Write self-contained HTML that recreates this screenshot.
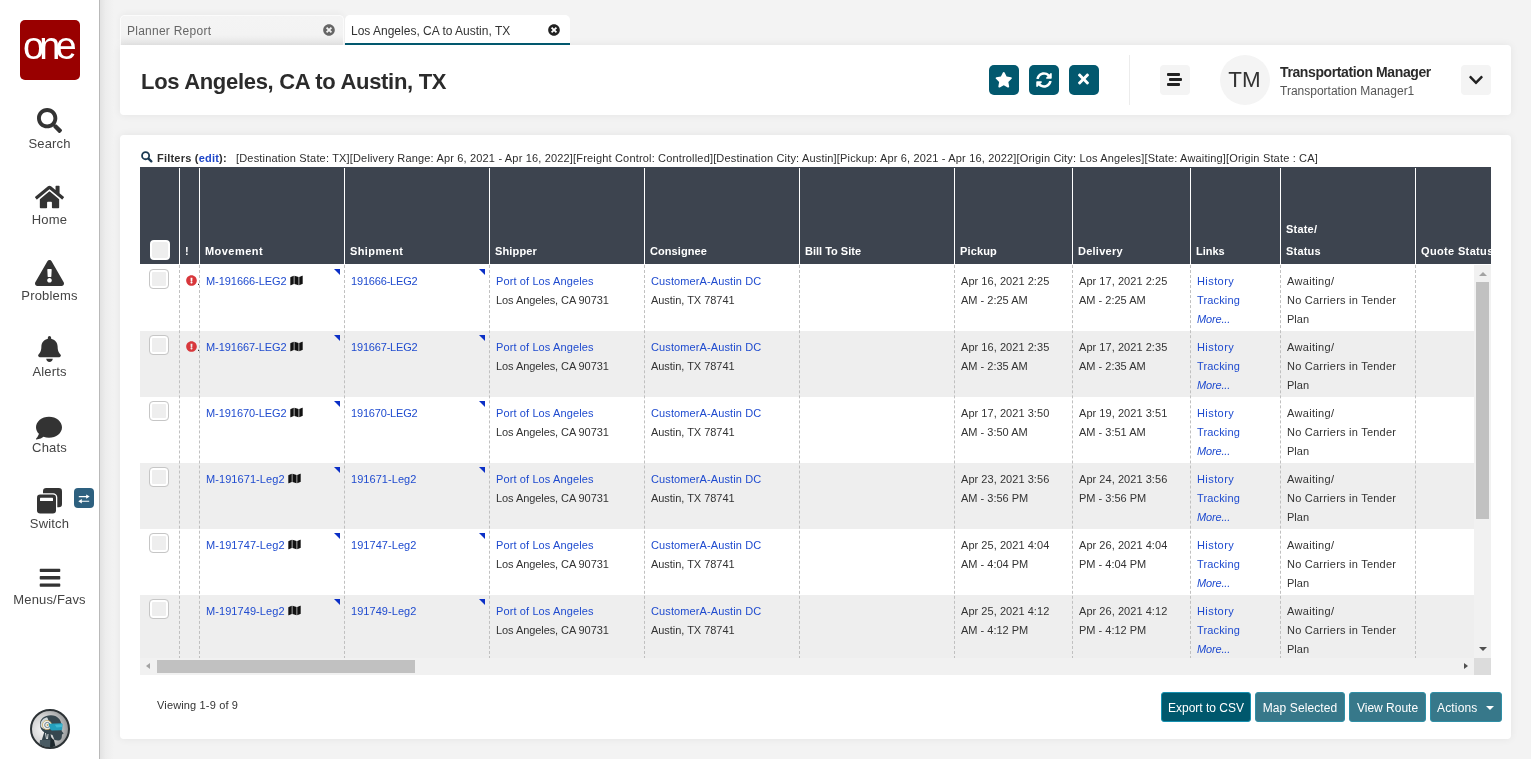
<!DOCTYPE html>
<html lang="en"><head><meta charset="utf-8"><title>Los Angeles, CA to Austin, TX</title>
<style>
*{box-sizing:border-box;margin:0;padding:0}
html,body{width:1531px;height:759px;overflow:hidden}
body{background:#f3f3f3;will-change:transform;font-family:"Liberation Sans",sans-serif;color:#333;position:relative;font-size:11px}
.ic{position:absolute;display:block}
svg{display:inline-block}
a{color:#1f4bcf;text-decoration:none}
#side{position:absolute;left:0;top:0;width:100px;height:759px;background:#fff;border-right:1px solid #b9b9b9}
#shade{position:absolute;left:100px;top:0;width:14px;height:759px;background:linear-gradient(90deg,#e2e2e2,#ededed 40%,#f3f3f3)}
#logo{position:absolute;left:20px;top:20px;width:60px;height:60px;border-radius:5px;background:#990000;color:#fff;text-align:center}
#logo span{display:block;white-space:nowrap;font-size:38px;line-height:60px;letter-spacing:-4.850px;position:absolute;left:3px;top:-4px}
.navl{position:absolute;left:0;width:99px;text-align:center;font-size:13px;line-height:16px;color:#444;letter-spacing:0.170px}
#badge{position:absolute;left:74px;top:488px;width:20px;height:20px;border-radius:4px;background:#2d607f;text-align:center;line-height:20px}

.tab{position:absolute;top:15px;height:30px;width:224px;font-size:12px;line-height:28px;padding-left:6px;border-radius:5px 5px 0 0}
#tab1{left:120px;background:linear-gradient(#f4f4f4 0,#f3f3f3 65%,#e6e6e6 100%);border:1px solid #fbfbfb;border-bottom:none;color:#666;letter-spacing:0.250px;padding-top:1px;box-shadow:0 -2px 6px rgba(0,0,0,0.040)}
#tab2{z-index:2;left:345px;width:225px;background:#fff;color:#333;border-bottom:2px solid #02586e;padding-top:2px}
.card{position:absolute;background:#fff;box-shadow:0 0 9px rgba(0,0,0,0.065);}
#hdr{left:120px;top:45px;width:1391px;height:70px;border-radius:0 4px 4px 4px}
#hdr h1{position:absolute;left:21px;top:23px;font-size:22px;line-height:28px;font-weight:700;color:#2b2b2b;white-space:nowrap;letter-spacing:-0.310px}
.abtn{position:absolute;top:20px;width:30px;height:30px;border-radius:5px;background:#02586e;text-align:center;line-height:30px}

#vdiv{position:absolute;left:1009px;top:10px;width:1px;height:50px;background:#ececec}
.gbtn{position:absolute;top:20px;width:30px;height:30px;border-radius:4px;background:#f4f4f4}
.gbtn i{position:absolute;width:13px;height:3px;border-radius:1px;background:#222}
#avatar{position:absolute;left:1100px;top:10px;width:50px;height:50px;border-radius:25px;background:#f4f4f4;font-size:22.400px;line-height:50px;text-align:center;color:#333;letter-spacing:0;text-indent:-1px}
#uname{position:absolute;left:1160px;top:19px;font-size:14px;line-height:17px;font-weight:700;color:#2b2b2b;white-space:nowrap;letter-spacing:-0.390px}
#urole{position:absolute;left:1160px;top:38px;font-size:12px;line-height:16px;color:#555;white-space:nowrap}
#main{left:120px;top:135px;width:1391px;height:604px;border-radius:4px}
#filters{position:absolute;left:20px;top:15px;height:16px;line-height:16px;font-size:11px;white-space:nowrap;color:#2e2e2e}
#filters b{position:absolute;left:17px;top:0;letter-spacing:.21px}
#filters .ft{position:absolute;left:96px;top:0;font-size:11px;letter-spacing:0.170px}
#filters a{color:#1d46c9}
#grid{position:absolute;left:20px;top:32px;width:1351px;height:508px;overflow:hidden;background:#fff}
#ghead{position:absolute;left:0;top:0;width:1351px;height:97px;background:#3d444f;overflow:hidden}
.hc{position:absolute;top:0;height:97px;color:#fff;font-weight:700;font-size:11px}
.ht{position:absolute;left:5px;bottom:2px;line-height:22px;white-space:nowrap}
.hs{position:absolute;top:1px;width:1px;height:96px;background:#fff}
.hcb{position:absolute;left:10px;top:73px;width:20px;height:20px;border:2px solid #fff;border-radius:4px;background:#eee}
#gbody{position:absolute;left:0;top:98px;width:1334px;height:393px;overflow:hidden;background:#fff}
.row{position:absolute;left:0;width:1351px;height:66px;background:#fff}
.row.alt{background:#eee}
.c{position:absolute;top:0;height:66px;padding:7px 0 0 6px;line-height:19px;font-size:11px;white-space:nowrap;color:#333}
.cb{position:absolute;left:9px;top:4px;width:20px;height:20px;border:1px solid #c6c6c6;border-radius:4px;background:#eee;box-shadow:inset 0 0 0 2px #fff}
.dot{position:absolute;left:57px;top:9px;font-size:11px;line-height:14px;color:#333}
.tri{position:absolute;right:4px;top:4px;width:0;height:0;border-top:6px solid #0b2fc6;border-left:6px solid transparent}
.vs{position:absolute;top:0;width:0;height:394px;border-left:1px dashed #c0c0c0}
#vsb{position:absolute;left:1334px;top:98px;width:17px;height:393px;background:#f1f1f1}
#vsb b{position:absolute;left:2px;top:17px;width:13px;height:237px;background:#c1c1c1}
#hsb{position:absolute;left:0;top:491px;width:1334px;height:17px;background:#f1f1f1}
#hsb b{position:absolute;left:17px;top:2px;width:258px;height:13px;background:#c1c1c1}
#corner{position:absolute;left:1334px;top:491px;width:17px;height:17px;background:#dcdcdc}
.up,.dn,.lf,.rt{position:absolute;width:0;height:0}
.up{left:5px;top:7px;border-left:4px solid transparent;border-right:4px solid transparent;border-bottom:4px solid #a3a3a3}
.dn{left:5px;bottom:7px;border-left:4px solid transparent;border-right:4px solid transparent;border-top:4px solid #505050}
.lf{left:6px;top:5px;border-top:3.500px solid transparent;border-bottom:3.500px solid transparent;border-right:4px solid #a3a3a3}
.rt{right:6px;top:5px;border-top:3.500px solid transparent;border-bottom:3.500px solid transparent;border-left:4px solid #505050}
#viewing{position:absolute;left:37px;top:562px;font-size:11px;line-height:16px;color:#333;letter-spacing:0.150px}
.btn{position:absolute;top:557px;height:30px;background:#37788a;border:1px solid #2f8fa6;color:#fff;font-size:12px;line-height:28px;text-align:center;white-space:nowrap;border-radius:3px}
.btn.dk{background:#00586d;border-color:#1590b0}
.caret{position:absolute;right:7px;top:13px;width:0;height:0;border-left:4px solid transparent;border-right:4px solid transparent;border-top:4.200px solid #fff}

.c2{letter-spacing:.45px}.c3{letter-spacing:.4px}.c4{letter-spacing:.14px}.c5{letter-spacing:.07px}.c7{letter-spacing:.15px}.c8{letter-spacing:.25px}.c10{letter-spacing:.2px}.c11{letter-spacing:.35px}
.mv{letter-spacing:-.06px}.sh{letter-spacing:-.18px}.po{letter-spacing:.115px}.ad1{letter-spacing:-.076px}.cu{letter-spacing:.11px}.ad2{letter-spacing:-.04px}.dt{letter-spacing:.05px}
.l1{letter-spacing:.42px}.l2{letter-spacing:.14px}.l3{letter-spacing:-.17px}.s2{letter-spacing:.23px}
.s1{letter-spacing:.33px}
.btn span{position:relative;top:0.500px}
.b2{letter-spacing:.1px}.b4{letter-spacing:.17px;position:absolute!important;left:6px}
.mvl{letter-spacing:.07px}.shl{letter-spacing:.05px}

</style></head><body>
<div id="shade"></div><div id="side">
<div id="logo"><span>one</span></div>
<svg class="ic" style="left:37px;top:108px;width:25px;height:25px" viewBox="0 0 512 512" ><path fill="#333" d="M505 442.7L405.3 343c-4.500-4.500-10.600-7-17-7H372c27.600-35.300 44-79.700 44-128C416 93.100 322.900 0 208 0S0 93.100 0 208s93.100 208 208 208c48.300 0 92.700-16.400 128-44v16.300c0 6.400 2.500 12.500 7 17l99.700 99.700c9.400 9.400 24.600 9.400 33.900 0l28.300-28.300c9.400-9.400 9.400-24.600.1-34zM208 336c-70.700 0-128-57.200-128-128 0-70.700 57.200-128 128-128 70.700 0 128 57.200 128 128 0 70.700-57.200 128-128 128z"/></svg><div class="navl" style="top:136px">Search</div>
<svg class="ic" style="left:35px;top:184px;width:29px;height:26px" viewBox="0 0 576 512" ><path fill="#333" d="M280.370 148.260L96 300.110V464a16 16 0 0 0 16 16l112.060-.290a16 16 0 0 0 15.920-16V368a16 16 0 0 1 16-16h64a16 16 0 0 1 16 16v95.640a16 16 0 0 0 16 16.050L464 480a16 16 0 0 0 16-16V300L295.670 148.260a12.190 12.190 0 0 0-15.300 0zM571.600 251.470L488 182.560V44.050a12 12 0 0 0-12-12h-56a12 12 0 0 0-12 12v72.610L318.470 43a48 48 0 0 0-61 0L4.340 251.470a12 12 0 0 0-1.600 16.900l25.500 31A12 12 0 0 0 45.150 301l235.220-193.740a12.190 12.190 0 0 1 15.300 0L530.900 301a12 12 0 0 0 16.900-1.600l25.500-31a12 12 0 0 0-1.700-16.930z"/></svg><div class="navl" style="top:212px">Home</div>
<svg class="ic" style="left:35px;top:260px;width:29px;height:26px" viewBox="0 0 576 512" ><path fill="#333" d="M569.517 440.013C587.975 472.007 564.806 512 527.940 512H48.054c-36.937 0-59.999-40.055-41.577-71.987L246.423 23.985c18.467-32.009 64.720-31.951 83.154 0l239.940 416.028zM288 354c-25.405 0-46 20.595-46 46s20.595 46 46 46 46-20.595 46-46-20.595-46-46-46zm-43.673-165.346l7.418 136c.347 6.364 5.609 11.346 11.982 11.346h48.546c6.373 0 11.635-4.982 11.982-11.346l7.418-136c.375-6.874-5.098-12.654-11.982-12.654h-63.383c-6.884 0-12.356 5.780-11.981 12.654z"/></svg><div class="navl" style="top:288px">Problems</div>
<svg class="ic" style="left:38px;top:336px;width:23px;height:26px" viewBox="0 0 448 512" ><path fill="#333" d="M224 512c35.320 0 63.970-28.650 63.970-64H160.030c0 35.350 28.650 64 63.970 64zm215.390-149.710c-19.320-20.760-55.470-51.990-55.470-154.290 0-77.700-54.480-139.900-127.940-155.160V32c0-17.670-14.320-32-31.980-32s-31.980 14.330-31.980 32v20.840C118.560 68.100 64.080 130.300 64.080 208c0 102.300-36.150 133.530-55.470 154.290-6 6.450-8.660 14.160-8.610 21.710.110 16.400 12.980 32 32.100 32h383.800c19.120 0 32-15.600 32.100-32 .050-7.550-2.610-15.270-8.610-21.710z"/></svg><div class="navl" style="top:364px">Alerts</div>
<svg class="ic" style="left:36px;top:415px;width:26px;height:26px" viewBox="0 0 512 512" ><path fill="#333" d="M256 32C114.600 32 0 125.100 0 240c0 49.600 21.400 95 57 130.700C44.500 421.100 2.700 466 2.200 466.500c-2.200 2.300-2.800 5.700-1.500 8.700S4.800 480 8 480c66.300 0 116-31.800 140.600-51.400 32.700 12.300 69 19.400 107.400 19.400 141.400 0 256-93.100 256-208S397.400 32 256 32z"/></svg><div class="navl" style="top:440px">Chats</div>
<div class="navl" style="top:516px">Switch</div>
<svg class="ic" style="left:38.7px;top:566px;width:22px;height:23.5px" viewBox="0 0 448 512" ><path fill="#333" d="M16 132h416c8.837 0 16-7.163 16-16V76c0-8.837-7.163-16-16-16H16C7.163 60 0 67.163 0 76v40c0 8.837 7.163 16 16 16zm0 160h416c8.837 0 16-7.163 16-16v-40c0-8.837-7.163-16-16-16H16c-8.837 0-16 7.163-16 16v40c0 8.837 7.163 16 16 16zm0 160h416c8.837 0 16-7.163 16-16v-40c0-8.837-7.163-16-16-16H16c-8.837 0-16 7.163-16 16v40c0 8.837 7.163 16 16 16z"/></svg><div class="navl" style="top:592px">Menus/Favs</div>
<svg class="ic" style="left:36px;top:487px;width:28px;height:28px" viewBox="0 0 28 28"><rect x="7" y="1" width="19" height="19.200" rx="3.200" fill="#333"/><rect x="-0.300" y="6.200" width="21.600" height="21.600" rx="4.200" fill="#fff"/><rect x="1" y="7.500" width="19" height="19" rx="3.200" fill="#333"/><rect x="4" y="10.800" width="13" height="3.200" rx="0.500" fill="#fff"/></svg>
<div id="badge"><svg style="position:absolute;left:4px;top:5.500px;width:12px;height:10px" viewBox="0 0 12 10"><path d="M0.800 2.600H9M3 7.200H11.200" stroke="#fff" stroke-width="1.100" fill="none"/><path d="M8.200 0.400L11.700 2.600L8.200 4.800zM3.800 5L0.300 7.200L3.800 9.400z" fill="#fff"/></svg></div>
<svg class="ic" style="left:30px;top:709px;width:40px;height:40px" viewBox="0 0 40 40"><defs><radialGradient id="ag" cx="32%" cy="52%" r="70%"><stop offset="0" stop-color="#f6f6f6"/><stop offset="0.550" stop-color="#cfcfcf"/><stop offset="1" stop-color="#8b8e90"/></radialGradient><clipPath id="ac"><circle cx="20" cy="20" r="18.200"/></clipPath></defs><circle cx="20" cy="20" r="19" fill="url(#ag)" stroke="#2c3235" stroke-width="2"/><g clip-path="url(#ac)"><path d="M10 16C9.500 9.500 15 6 21 6.200c6.500.2 10 4.500 10.500 9.500l.2 6.300 2 2.600-1.700 1-.2 2.500c-.2 2.500-1.800 3.600-3.800 3.400l-3.500-.5-2-5-8-2.500C11.500 21.800 10.200 19 10 16z" fill="#36474f"/><path d="M10.500 15.500c.3-4 3-6.500 6.500-7.300 2 2.500 2.500 9-.5 12.300-3.500-.5-6.200-2-6-5z" fill="#cfd6d9"/><circle cx="17" cy="16" r="4.600" fill="#eef0f0" stroke="#c9a85a" stroke-width="0.700"/><circle cx="17.300" cy="16" r="2.600" fill="none" stroke="#6f8189" stroke-width="1"/><circle cx="17.600" cy="16" r="1" fill="#c9a85a"/><path d="M18.500 14.800l12.800-.6c.8 0 1.300.6 1.300 1.400l-.4 4.300c0 .8-.6 1.300-1.400 1.300L22.500 21.600c-2.300 0-2.800-2.600-3-4z" fill="#259fbc"/><path d="M25 15.800l7.300-.5-.2 2.700-5.600.5z" fill="#4cc4db" opacity="0.700"/><path d="M14.500 22.500l6 2.500 1.500 6-1 9h-11l1.500-8z" fill="#33434b"/><path d="M15.500 24l1 6M18 25l-.5 5" stroke="#e6eaeb" stroke-width="0.900"/><path d="M10 31h13v9H9z" fill="#4a5b63"/><path d="M20.500 28l3.500 3 2 9h-6z" fill="#1f292e"/></g></svg>
</div>
<div id="tab1" class="tab"><span>Planner Report</span><svg class="ic" style="left:202px;top:8px;width:12px;height:12px" viewBox="0 0 512 512" ><path fill="#666" d="M256 8C119 8 8 119 8 256s111 248 248 248 248-111 248-248S393 8 256 8zm121.600 313.100c4.700 4.700 4.700 12.300 0 17L338 377.600c-4.700 4.700-12.300 4.700-17 0L256 312l-65.100 65.600c-4.700 4.700-12.300 4.700-17 0L134.400 338c-4.700-4.700-4.700-12.300 0-17l65.600-65-65.600-65.100c-4.700-4.700-4.700-12.300 0-17l39.600-39.600c4.700-4.700 12.300-4.700 17 0l65 65.700 65.100-65.600c4.700-4.700 12.300-4.700 17 0l39.600 39.600c4.700 4.700 4.700 12.300 0 17L312 256l65.600 65.100z"/></svg></div>
<div id="tab2" class="tab"><span>Los Angeles, CA to Austin, TX</span><svg class="ic" style="left:203px;top:9px;width:12px;height:12px" viewBox="0 0 512 512" ><path fill="#222" d="M256 8C119 8 8 119 8 256s111 248 248 248 248-111 248-248S393 8 256 8zm121.600 313.100c4.700 4.700 4.700 12.300 0 17L338 377.600c-4.700 4.700-12.300 4.700-17 0L256 312l-65.100 65.600c-4.700 4.700-12.300 4.700-17 0L134.400 338c-4.700-4.700-4.700-12.300 0-17l65.600-65-65.600-65.100c-4.700-4.700-4.700-12.300 0-17l39.600-39.600c4.700-4.700 12.300-4.700 17 0l65 65.700 65.100-65.600c4.700-4.700 12.300-4.700 17 0l39.600 39.600c4.700 4.700 4.700 12.300 0 17L312 256l65.600 65.100z"/></svg></div>
<div id="hdr" class="card">
<h1>Los Angeles, CA to Austin, TX</h1>
<div class="abtn" style="left:869px"><svg style="width:17.5px;height:15.5px;position:absolute;left:5.600px;top:7px" viewBox="0 0 576 512"><path fill="#fff" d="M259.300 17.800L194 150.200 47.900 171.500c-26.200 3.800-36.700 36.100-17.700 54.600l105.700 103-25 145.500c-4.500 26.300 23.200 46 46.400 33.700L288 439.600l130.700 68.700c23.200 12.200 50.900-7.400 46.400-33.700l-25-145.500 105.700-103c19-18.500 8.500-50.800-17.700-54.600L382 150.200 316.700 17.800c-11.700-23.600-45.600-23.900-57.400 0z"/></svg></div><div class="abtn" style="left:909px"><svg style="width:16px;height:16px;position:absolute;left:6.800px;top:6.750px" viewBox="0 0 512 512"><path fill="#fff" d="M370.720 133.280C339.458 104.008 298.888 87.962 255.848 88c-77.458.068-144.328 53.178-162.791 126.850-1.344 5.363-6.122 9.150-11.651 9.150H24.103c-7.498 0-13.194-6.807-11.807-14.176C33.933 94.924 134.813 8 256 8c66.448 0 126.791 26.136 171.315 68.685L463.030 40.970C478.149 25.851 504 36.559 504 57.941V192c0 13.255-10.745 24-24 24H345.941c-21.382 0-32.090-25.851-16.971-40.971l41.750-41.749zM32 296h134.059c21.382 0 32.090 25.851 16.971 40.971l-41.750 41.750c31.262 29.273 71.835 45.319 114.876 45.280 77.418-.070 144.315-53.144 162.787-126.849 1.344-5.363 6.122-9.150 11.651-9.150h57.304c7.498 0 13.194 6.807 11.807 14.176C478.067 417.076 377.187 504 256 504c-66.448 0-126.791-26.136-171.315-68.685L48.970 471.030C33.851 486.149 8 475.441 8 454.059V320c0-13.255 10.745-24 24-24z"/></svg></div><div class="abtn" style="left:949px"><svg style="width:11px;height:16px;position:absolute;left:8.900px;top:6.400px" viewBox="0 0 352 512"><path fill="#fff" d="M242.720 256l100.070-100.070c12.280-12.280 12.280-32.190 0-44.480l-22.240-22.240c-12.280-12.280-32.190-12.280-44.480 0L176 189.280 75.930 89.210c-12.280-12.280-32.190-12.280-44.480 0L9.210 111.450c-12.280 12.280-12.280 32.190 0 44.480L109.280 256 9.210 356.070c-12.280 12.280-12.280 32.190 0 44.480l22.240 22.240c12.280 12.280 32.200 12.280 44.480 0L176 322.720l100.070 100.070c12.280 12.280 32.200 12.280 44.480 0l22.240-22.240c12.280-12.280 12.280-32.190 0-44.480L242.720 256z"/></svg></div>
<div id="vdiv"></div>
<div class="gbtn" style="left:1040px"><i style="left:7px;top:8px"></i><i style="left:9px;top:13px"></i><i style="left:7px;top:18px"></i></div>
<div id="avatar">TM</div>
<div id="uname">Transportation Manager</div>
<div id="urole">Transportation Manager1</div>
<div class="gbtn" style="left:1341px"><svg style="width:14px;height:16px;position:absolute;left:8px;top:7px" viewBox="0 0 448 512"><path fill="#222" d="M207.029 381.476L12.686 187.132c-9.373-9.373-9.373-24.569 0-33.941l22.667-22.667c9.357-9.357 24.522-9.375 33.901-.040L224 284.505l154.745-154.021c9.379-9.335 24.544-9.317 33.901.040l22.667 22.667c9.373 9.373 9.373 24.569 0 33.941L240.971 381.476c-9.373 9.372-24.569 9.372-33.942 0z"/></svg></div>
</div>
<div id="main" class="card">
<div id="filters"><svg style="position:absolute;left:1px;top:1px;width:12px;height:12px" viewBox="0 0 12 12"><circle cx="4.600" cy="4.700" r="3.550" fill="none" stroke="#1b3a52" stroke-width="1.800"/><path d="M7.500 7.600L10.300 10.400" stroke="#1b3a52" stroke-width="2.300" stroke-linecap="round"/></svg><b>Filters (<a>edit</a>):</b><span class="ft">[Destination State: TX][Delivery Range: Apr 6, 2021 - Apr 16, 2022][Freight Control: Controlled][Destination City: Austin][Pickup: Apr 6, 2021 - Apr 16, 2022][Origin City: Los Angeles][State: Awaiting][Origin State : CA]</span></div>
<div id="grid">
<div id="ghead">
<div class="hc" style="left:0px;width:39px"><span class="hcb"></span></div><div class="hs" style="left:39px"></div><div class="hc" style="left:40px;width:19px"><span class="ht c1">!</span></div><div class="hs" style="left:59px"></div><div class="hc" style="left:60px;width:144px"><span class="ht c2">Movement</span></div><div class="hs" style="left:204px"></div><div class="hc" style="left:205px;width:144px"><span class="ht c3">Shipment</span></div><div class="hs" style="left:349px"></div><div class="hc" style="left:350px;width:154px"><span class="ht c4">Shipper</span></div><div class="hs" style="left:504px"></div><div class="hc" style="left:505px;width:154px"><span class="ht c5">Consignee</span></div><div class="hs" style="left:659px"></div><div class="hc" style="left:660px;width:154px"><span class="ht c6">Bill To Site</span></div><div class="hs" style="left:814px"></div><div class="hc" style="left:815px;width:117px"><span class="ht c7">Pickup</span></div><div class="hs" style="left:932px"></div><div class="hc" style="left:933px;width:117px"><span class="ht c8">Delivery</span></div><div class="hs" style="left:1050px"></div><div class="hc" style="left:1051px;width:89px"><span class="ht c9">Links</span></div><div class="hs" style="left:1140px"></div><div class="hc" style="left:1141px;width:134px"><span class="ht c10">State/<br>Status</span></div><div class="hs" style="left:1275px"></div><div class="hc" style="left:1276px;width:75px"><span class="ht c11">Quote Status</span></div>
</div>
<div id="gbody">
<div class="row" style="top:0px">
<span class="cb"></span><svg class="ic" style="left:46px;top:10px;width:11px;height:11px" viewBox="0 0 512 512" ><path fill="#d8373b" d="M504 256c0 136.997-111.043 248-248 248S8 392.997 8 256C8 119.083 119.043 8 256 8s248 111.083 248 248zm-248 50c-25.405 0-46 20.595-46 46s20.595 46 46 46 46-20.595 46-46-20.595-46-46-46zm-43.673-165.346l7.418 136c.347 6.364 5.609 11.346 11.982 11.346h48.546c6.373 0 11.635-4.982 11.982-11.346l7.418-136c.375-6.874-5.098-12.654-11.982-12.654h-63.383c-6.884 0-12.356 5.780-11.981 12.654z"/></svg><span class="dot">.</span><div class="c" style="left:60px;width:144px"><a class="mv">M-191666-LEG2</a><svg style="width:13px;height:11px;vertical-align:-1px;margin-left:3px" viewBox="0 0 576 512"><path fill="#111" d="M0 117.660v346.320c0 11.320 11.430 19.060 21.940 14.860L160 416V32L20.120 87.950A32.006 32.006 0 0 0 0 117.660zM192 416l192 64V96L192 32v384zM554.060 33.160L416 96v384l139.880-55.950A31.996 31.996 0 0 0 576 394.340V48.020c0-11.320-11.430-19.060-21.940-14.860z"/></svg><i class="tri"></i></div><div class="c" style="left:205px;width:144px"><a class="sh">191666-LEG2</a><i class="tri"></i></div><div class="c" style="left:350px;width:154px"><a class="po">Port of Los Angeles</a><br><span class="ad1">Los Angeles, CA 90731</span></div><div class="c" style="left:505px;width:154px"><a class="cu">CustomerA-Austin DC</a><br><span class="ad2">Austin, TX 78741</span></div><div class="c" style="left:815px;width:117px"><span class="dt">Apr 16, 2021 2:25</span><br><span class="dt2">AM - 2:25 AM</span></div><div class="c" style="left:933px;width:117px"><span class="dt">Apr 17, 2021 2:25</span><br><span class="dt2">AM - 2:25 AM</span></div><div class="c" style="left:1051px;width:89px"><a class="l1">History</a><br><a class="l2">Tracking</a><br><a class="l3"><em>More...</em></a></div><div class="c" style="left:1141px;width:134px"><span class="s1">Awaiting/</span><br><span class="s2">No Carriers in Tender</span><br><span class="s3">Plan</span></div>
</div>
<div class="row alt" style="top:66px">
<span class="cb"></span><svg class="ic" style="left:46px;top:10px;width:11px;height:11px" viewBox="0 0 512 512" ><path fill="#d8373b" d="M504 256c0 136.997-111.043 248-248 248S8 392.997 8 256C8 119.083 119.043 8 256 8s248 111.083 248 248zm-248 50c-25.405 0-46 20.595-46 46s20.595 46 46 46 46-20.595 46-46-20.595-46-46-46zm-43.673-165.346l7.418 136c.347 6.364 5.609 11.346 11.982 11.346h48.546c6.373 0 11.635-4.982 11.982-11.346l7.418-136c.375-6.874-5.098-12.654-11.982-12.654h-63.383c-6.884 0-12.356 5.780-11.981 12.654z"/></svg><span class="dot">.</span><div class="c" style="left:60px;width:144px"><a class="mv">M-191667-LEG2</a><svg style="width:13px;height:11px;vertical-align:-1px;margin-left:3px" viewBox="0 0 576 512"><path fill="#111" d="M0 117.660v346.320c0 11.320 11.430 19.060 21.940 14.860L160 416V32L20.120 87.950A32.006 32.006 0 0 0 0 117.660zM192 416l192 64V96L192 32v384zM554.060 33.160L416 96v384l139.880-55.950A31.996 31.996 0 0 0 576 394.340V48.020c0-11.320-11.430-19.060-21.940-14.860z"/></svg><i class="tri"></i></div><div class="c" style="left:205px;width:144px"><a class="sh">191667-LEG2</a><i class="tri"></i></div><div class="c" style="left:350px;width:154px"><a class="po">Port of Los Angeles</a><br><span class="ad1">Los Angeles, CA 90731</span></div><div class="c" style="left:505px;width:154px"><a class="cu">CustomerA-Austin DC</a><br><span class="ad2">Austin, TX 78741</span></div><div class="c" style="left:815px;width:117px"><span class="dt">Apr 16, 2021 2:35</span><br><span class="dt2">AM - 2:35 AM</span></div><div class="c" style="left:933px;width:117px"><span class="dt">Apr 17, 2021 2:35</span><br><span class="dt2">AM - 2:35 AM</span></div><div class="c" style="left:1051px;width:89px"><a class="l1">History</a><br><a class="l2">Tracking</a><br><a class="l3"><em>More...</em></a></div><div class="c" style="left:1141px;width:134px"><span class="s1">Awaiting/</span><br><span class="s2">No Carriers in Tender</span><br><span class="s3">Plan</span></div>
</div>
<div class="row" style="top:132px">
<span class="cb"></span><div class="c" style="left:60px;width:144px"><a class="mv">M-191670-LEG2</a><svg style="width:13px;height:11px;vertical-align:-1px;margin-left:3px" viewBox="0 0 576 512"><path fill="#111" d="M0 117.660v346.320c0 11.320 11.430 19.060 21.940 14.860L160 416V32L20.120 87.950A32.006 32.006 0 0 0 0 117.660zM192 416l192 64V96L192 32v384zM554.060 33.160L416 96v384l139.880-55.950A31.996 31.996 0 0 0 576 394.340V48.020c0-11.320-11.430-19.060-21.940-14.860z"/></svg><i class="tri"></i></div><div class="c" style="left:205px;width:144px"><a class="sh">191670-LEG2</a><i class="tri"></i></div><div class="c" style="left:350px;width:154px"><a class="po">Port of Los Angeles</a><br><span class="ad1">Los Angeles, CA 90731</span></div><div class="c" style="left:505px;width:154px"><a class="cu">CustomerA-Austin DC</a><br><span class="ad2">Austin, TX 78741</span></div><div class="c" style="left:815px;width:117px"><span class="dt">Apr 17, 2021 3:50</span><br><span class="dt2">AM - 3:50 AM</span></div><div class="c" style="left:933px;width:117px"><span class="dt">Apr 19, 2021 3:51</span><br><span class="dt2">AM - 3:51 AM</span></div><div class="c" style="left:1051px;width:89px"><a class="l1">History</a><br><a class="l2">Tracking</a><br><a class="l3"><em>More...</em></a></div><div class="c" style="left:1141px;width:134px"><span class="s1">Awaiting/</span><br><span class="s2">No Carriers in Tender</span><br><span class="s3">Plan</span></div>
</div>
<div class="row alt" style="top:198px">
<span class="cb"></span><div class="c" style="left:60px;width:144px"><a class="mvl">M-191671-Leg2</a><svg style="width:13px;height:11px;vertical-align:-1px;margin-left:3px" viewBox="0 0 576 512"><path fill="#111" d="M0 117.660v346.320c0 11.320 11.430 19.060 21.940 14.860L160 416V32L20.120 87.950A32.006 32.006 0 0 0 0 117.660zM192 416l192 64V96L192 32v384zM554.060 33.160L416 96v384l139.880-55.950A31.996 31.996 0 0 0 576 394.340V48.020c0-11.320-11.430-19.060-21.940-14.860z"/></svg><i class="tri"></i></div><div class="c" style="left:205px;width:144px"><a class="shl">191671-Leg2</a><i class="tri"></i></div><div class="c" style="left:350px;width:154px"><a class="po">Port of Los Angeles</a><br><span class="ad1">Los Angeles, CA 90731</span></div><div class="c" style="left:505px;width:154px"><a class="cu">CustomerA-Austin DC</a><br><span class="ad2">Austin, TX 78741</span></div><div class="c" style="left:815px;width:117px"><span class="dt">Apr 23, 2021 3:56</span><br><span class="dt2">AM - 3:56 PM</span></div><div class="c" style="left:933px;width:117px"><span class="dt">Apr 24, 2021 3:56</span><br><span class="dt2">PM - 3:56 PM</span></div><div class="c" style="left:1051px;width:89px"><a class="l1">History</a><br><a class="l2">Tracking</a><br><a class="l3"><em>More...</em></a></div><div class="c" style="left:1141px;width:134px"><span class="s1">Awaiting/</span><br><span class="s2">No Carriers in Tender</span><br><span class="s3">Plan</span></div>
</div>
<div class="row" style="top:264px">
<span class="cb"></span><div class="c" style="left:60px;width:144px"><a class="mvl">M-191747-Leg2</a><svg style="width:13px;height:11px;vertical-align:-1px;margin-left:3px" viewBox="0 0 576 512"><path fill="#111" d="M0 117.660v346.320c0 11.320 11.430 19.060 21.940 14.860L160 416V32L20.120 87.950A32.006 32.006 0 0 0 0 117.660zM192 416l192 64V96L192 32v384zM554.060 33.160L416 96v384l139.880-55.950A31.996 31.996 0 0 0 576 394.340V48.020c0-11.320-11.430-19.060-21.940-14.860z"/></svg><i class="tri"></i></div><div class="c" style="left:205px;width:144px"><a class="shl">191747-Leg2</a><i class="tri"></i></div><div class="c" style="left:350px;width:154px"><a class="po">Port of Los Angeles</a><br><span class="ad1">Los Angeles, CA 90731</span></div><div class="c" style="left:505px;width:154px"><a class="cu">CustomerA-Austin DC</a><br><span class="ad2">Austin, TX 78741</span></div><div class="c" style="left:815px;width:117px"><span class="dt">Apr 25, 2021 4:04</span><br><span class="dt2">AM - 4:04 PM</span></div><div class="c" style="left:933px;width:117px"><span class="dt">Apr 26, 2021 4:04</span><br><span class="dt2">PM - 4:04 PM</span></div><div class="c" style="left:1051px;width:89px"><a class="l1">History</a><br><a class="l2">Tracking</a><br><a class="l3"><em>More...</em></a></div><div class="c" style="left:1141px;width:134px"><span class="s1">Awaiting/</span><br><span class="s2">No Carriers in Tender</span><br><span class="s3">Plan</span></div>
</div>
<div class="row alt" style="top:330px">
<span class="cb"></span><div class="c" style="left:60px;width:144px"><a class="mvl">M-191749-Leg2</a><svg style="width:13px;height:11px;vertical-align:-1px;margin-left:3px" viewBox="0 0 576 512"><path fill="#111" d="M0 117.660v346.320c0 11.320 11.430 19.060 21.940 14.860L160 416V32L20.120 87.950A32.006 32.006 0 0 0 0 117.660zM192 416l192 64V96L192 32v384zM554.060 33.160L416 96v384l139.880-55.950A31.996 31.996 0 0 0 576 394.340V48.020c0-11.320-11.430-19.060-21.940-14.860z"/></svg><i class="tri"></i></div><div class="c" style="left:205px;width:144px"><a class="shl">191749-Leg2</a><i class="tri"></i></div><div class="c" style="left:350px;width:154px"><a class="po">Port of Los Angeles</a><br><span class="ad1">Los Angeles, CA 90731</span></div><div class="c" style="left:505px;width:154px"><a class="cu">CustomerA-Austin DC</a><br><span class="ad2">Austin, TX 78741</span></div><div class="c" style="left:815px;width:117px"><span class="dt">Apr 25, 2021 4:12</span><br><span class="dt2">AM - 4:12 PM</span></div><div class="c" style="left:933px;width:117px"><span class="dt">Apr 26, 2021 4:12</span><br><span class="dt2">PM - 4:12 PM</span></div><div class="c" style="left:1051px;width:89px"><a class="l1">History</a><br><a class="l2">Tracking</a><br><a class="l3"><em>More...</em></a></div><div class="c" style="left:1141px;width:134px"><span class="s1">Awaiting/</span><br><span class="s2">No Carriers in Tender</span><br><span class="s3">Plan</span></div>
</div>
<div class="vs" style="left:39px"></div><div class="vs" style="left:59px"></div><div class="vs" style="left:204px"></div><div class="vs" style="left:349px"></div><div class="vs" style="left:504px"></div><div class="vs" style="left:659px"></div><div class="vs" style="left:814px"></div><div class="vs" style="left:932px"></div><div class="vs" style="left:1050px"></div><div class="vs" style="left:1140px"></div><div class="vs" style="left:1275px"></div>
</div>
<div id="vsb"><i class="up"></i><b></b><i class="dn"></i></div>
<div id="hsb"><i class="lf"></i><b></b><i class="rt"></i></div>
<div id="corner"></div>
</div>
<div id="viewing">Viewing 1-9 of 9</div>
<div class="btn dk" style="left:1041px;width:90px"><span class="b1">Export to CSV</span></div><div class="btn" style="left:1135px;width:90px"><span class="b2">Map Selected</span></div><div class="btn" style="left:1229px;width:77px"><span class="b3">View Route</span></div><div class="btn" style="left:1310px;width:72px"><span class="b4">Actions</span><i class="caret"></i></div>
</div>
</body></html>
